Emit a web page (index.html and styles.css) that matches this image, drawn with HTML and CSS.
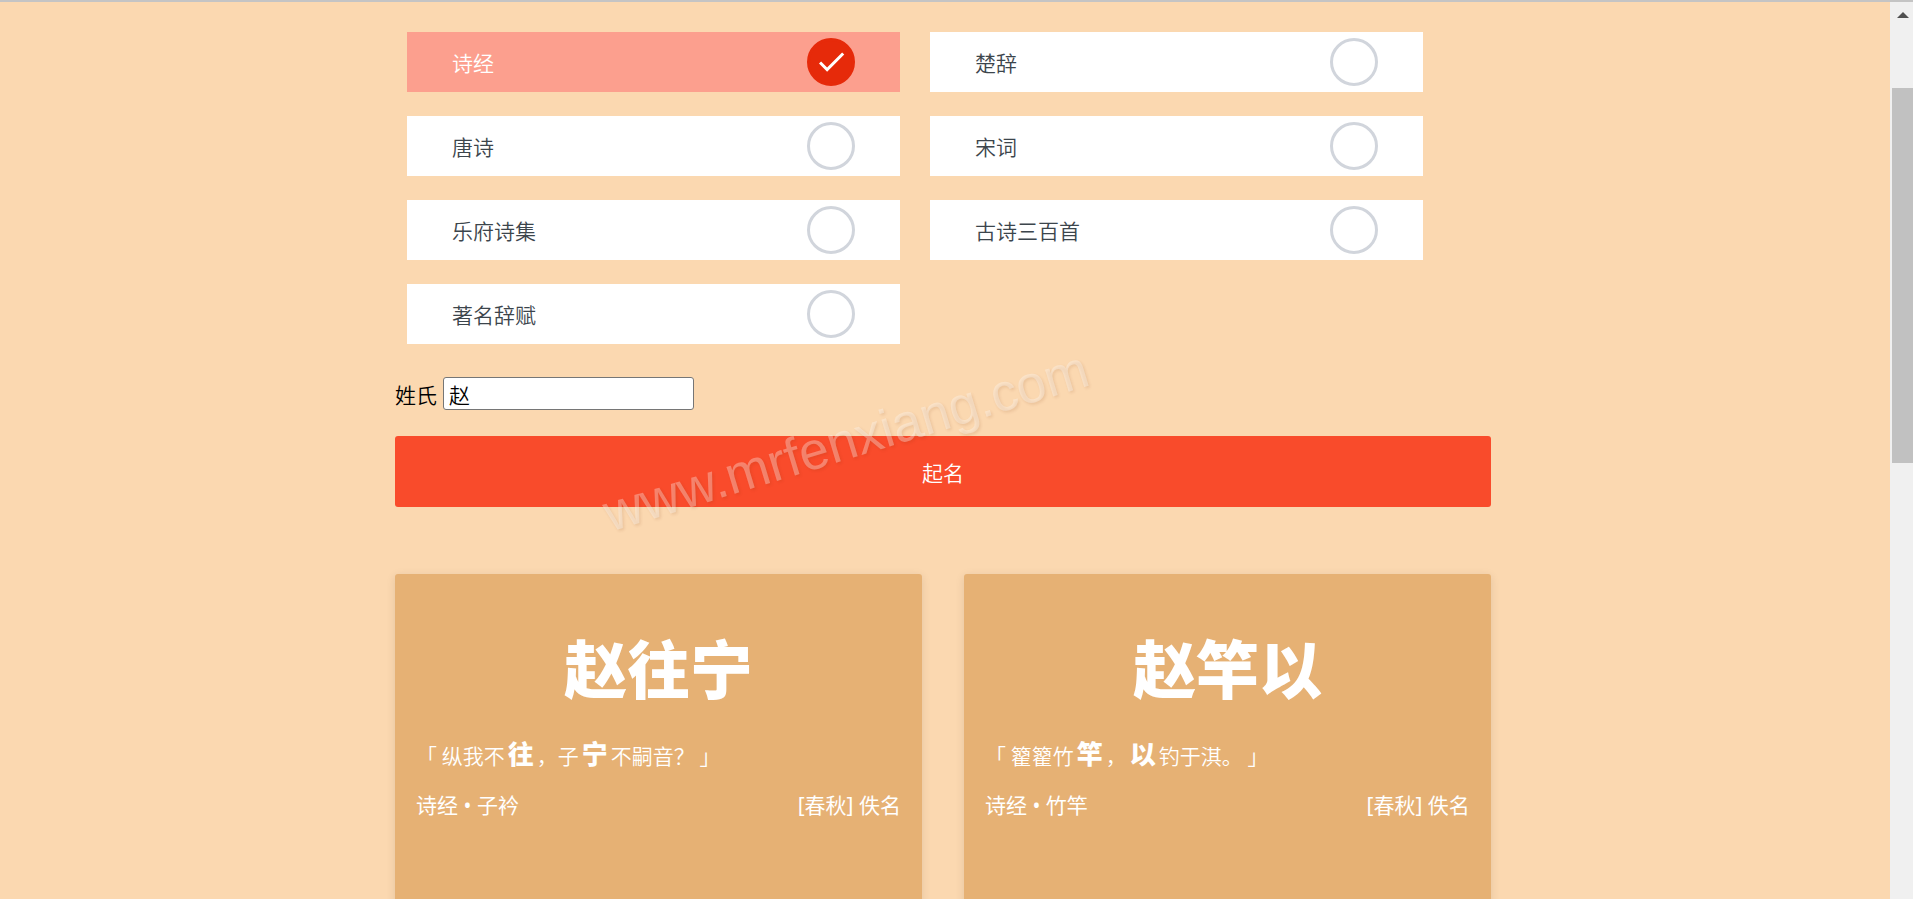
FILE: index.html
```
<!DOCTYPE html>
<html lang="zh-CN">
<head>
  <meta charset="UTF-8">
  <meta name="viewport" content="width=device-width, initial-scale=1.0">
  <title>起名</title>
  <link rel="stylesheet" href="styles.css">
</head>
<body>
  <div class="page">
    <main class="container">
      <form class="name-form">
        <div class="books">
          <div class="book">
            <input type="radio" name="book" id="shijing" checked>
            <label for="shijing">诗经</label>
          </div>
          <div class="book">
            <input type="radio" name="book" id="chuci">
            <label for="chuci">楚辞</label>
          </div>
          <div class="book">
            <input type="radio" name="book" id="tangshi">
            <label for="tangshi">唐诗</label>
          </div>
          <div class="book">
            <input type="radio" name="book" id="songci">
            <label for="songci">宋词</label>
          </div>
          <div class="book">
            <input type="radio" name="book" id="yuefu">
            <label for="yuefu">乐府诗集</label>
          </div>
          <div class="book">
            <input type="radio" name="book" id="gushi">
            <label for="gushi">古诗三百首</label>
          </div>
          <div class="book">
            <input type="radio" name="book" id="cifu">
            <label for="cifu">著名辞赋</label>
          </div>
        </div>

        <div class="family">
          <label for="family-name">姓氏</label>
          <input type="text" id="family-name" value="赵">
        </div>

        <button type="button" class="go">起名</button>
      </form>

      <div class="results">
        <article class="card">
          <h3>赵往宁</h3>
          <p class="sentence">「 纵我不<b>往</b>，子<b>宁</b>不嗣音？ 」</p>
          <div class="source">
            <span>诗经 • 子衿</span>
            <span>[春秋] 佚名</span>
          </div>
        </article>
        <article class="card">
          <h3>赵竿以</h3>
          <p class="sentence">「 籊籊竹<b>竿</b>，<b>以</b>钓于淇。 」</p>
          <div class="source">
            <span>诗经 • 竹竿</span>
            <span>[春秋] 佚名</span>
          </div>
        </article>
      </div>
    </main>
    <div class="watermark">www.mrfenxiang.com</div>
  </div>

  <div class="scrollbar">
    <svg class="arrow" viewBox="0 0 12 6"><path d="M0 6L6 0l6 6z" fill="#505050"/></svg>
    <div class="thumb"></div>
  </div>
</body>
</html>
```
FILE: styles.css
```
* {
  box-sizing: border-box;
}
body {
  display: flex;
  height: 100vh;
  margin: 0;
  overflow: hidden;
  border-top: 2px solid #c4c4c4;
  font-family: "Noto Sans CJK SC", sans-serif;
  font-size: 21px;
  font-weight: 350;
  line-height: 30px;
  background-color: #fbd8b0;
}
.page {
  position: relative;
  flex: 1;
  padding: 18px 4px 0 0;
  overflow: hidden;
}
.container {
  width: 58.1%;
  margin: 0 auto;
}

/* book list */
.books {
  display: grid;
  grid-template-columns: 1fr 1fr;
  gap: 24px 30px;
  padding: 12px 68px 12px 12px;
}
.book {
  display: flex;
  flex-direction: row-reverse;
  align-items: center;
  height: 60px;
  padding: 0 45px;
  color: #3c454c;
  background-color: #fff;
}
.book label {
  flex: 1;
  cursor: pointer;
}
.book input {
  appearance: none;
  width: 48px;
  height: 48px;
  margin: 0;
  border: 3px solid #d1d5dc;
  border-radius: 50%;
  background: #fff no-repeat 3px 4px / 48px 48px;
  cursor: pointer;
}
.book:has(input:checked) {
  color: #fff;
  background-color: #fc9f8e;
}
.book input:checked {
  border-color: #e62a0a;
  background-color: #e62a0a;
  background-image: url("data:image/svg+xml,%3Csvg width='32' height='32' viewBox='0 0 32 32' xmlns='http://www.w3.org/2000/svg'%3E%3Cpath d='M5.414 11L4 12.414l5.414 5.414L20.828 6.414 19.414 5l-10 10z' fill='%23fff'/%3E%3C/svg%3E");
}

/* family name and button */
.family {
  display: flex;
  align-items: center;
  gap: 6px;
  margin-top: 21px;
}
.family input {
  width: 251px;
  height: 33px;
  padding: 0 5px;
  border: 1px solid #767676;
  border-radius: 3px;
  font: inherit;
  color: #000;
  background-color: #fff;
}
.go {
  display: block;
  width: 100%;
  height: 71px;
  margin-top: 26px;
  border: none;
  border-radius: 3px;
  font: inherit;
  color: #fff;
  background-color: #f94b2b;
  cursor: pointer;
}

/* results */
.results {
  display: grid;
  grid-template-columns: 1fr 1fr;
  gap: 42px;
  margin-top: 67px;
}
.card {
  min-height: 360px;
  padding: 50px 21px;
  border-radius: 3px;
  color: #fff;
  background-color: #e6b174;
  box-shadow: 0 2px 10px rgba(0, 0, 0, 0.1);
}
.card h3 {
  margin: 0;
  font-size: 63px;
  font-weight: 900;
  line-height: 84px;
  text-align: center;
}
.sentence {
  margin: 30px 0 20px;
}
.sentence b {
  padding: 0 3px;
  font-size: 26px;
  font-weight: 900;
}
.source {
  display: flex;
  justify-content: space-between;
  font-family: "Noto Sans", "Noto Sans CJK SC", sans-serif;
  font-weight: 400;
}

.watermark {
  position: absolute;
  top: 413px;
  left: 594px;
  font-family: "Liberation Sans", sans-serif;
  font-size: 53px;
  font-weight: 400;
  line-height: 52px;
  color: rgba(255, 255, 255, 0.32);
  text-shadow: 1px 2px 3px rgba(120, 50, 0, 0.12);
  transform: rotate(-17deg);
  pointer-events: none;
}

.scrollbar {
  width: 23px;
  padding: 10px 0 0 2px;
  background-color: #f0f0f0;
}
.arrow {
  display: block;
  width: 12px;
  height: 6px;
  margin: 0 auto 70px 5px;
}
.thumb {
  height: 375px;
  background-color: #c1c1c1;
}
```
